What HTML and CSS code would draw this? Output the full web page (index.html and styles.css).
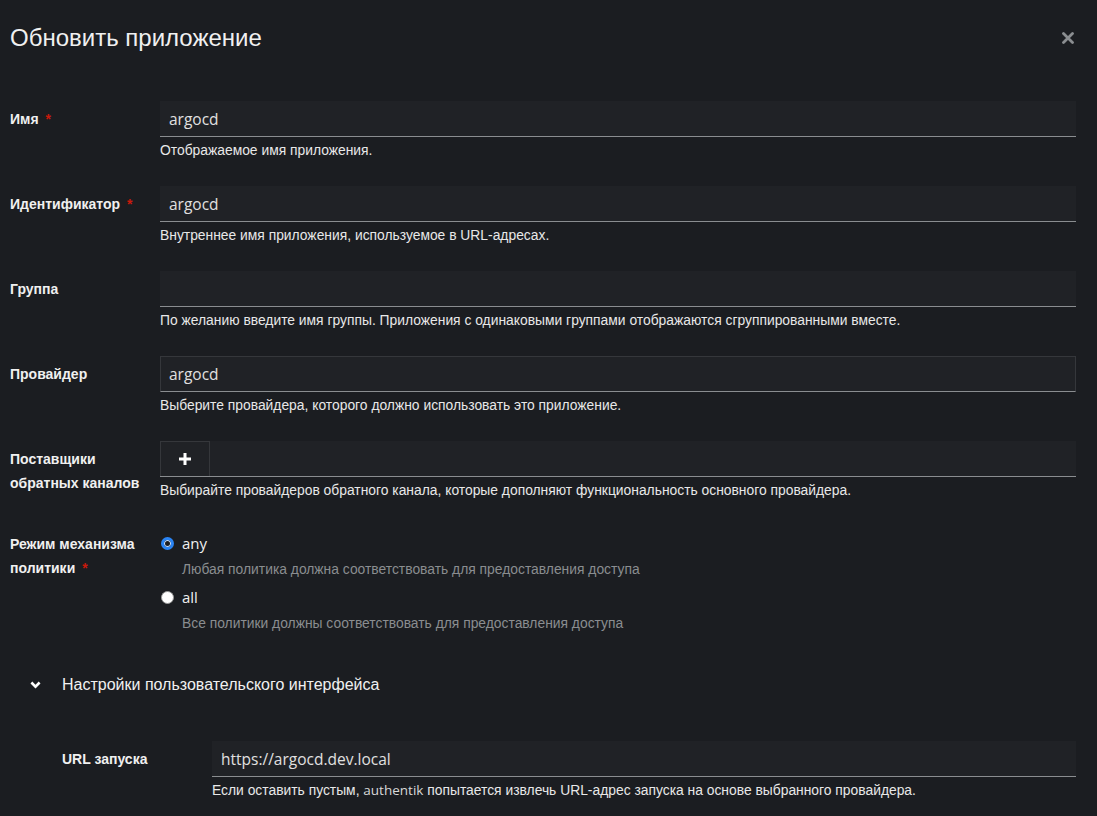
FILE: index.html
```html
<!DOCTYPE html>
<html lang="ru">
<head>
<meta charset="utf-8">
<title>Обновить приложение</title>
<link rel="stylesheet" href="styles.css">
</head>
<body>
<div class="modal">
  <header class="header">
    <h1 class="title">Обновить приложение</h1>
    <button class="close" aria-label="Закрыть">
      <svg width="12" height="12" viewBox="0 0 12 12"><path d="M1.5 1.5 L10.5 10.5 M10.5 1.5 L1.5 10.5" stroke="#8a8d90" stroke-width="2.8" stroke-linecap="round"/></svg>
    </button>
  </header>

  <form class="form">
    <div class="row">
      <label class="label">Имя<span class="req">*</span></label>
      <div class="control">
        <input class="input latin" value="argocd">
        <div class="helper">Отображаемое имя приложения.</div>
      </div>
    </div>

    <div class="row">
      <label class="label">Идентификатор<span class="req">*</span></label>
      <div class="control">
        <input class="input latin" value="argocd">
        <div class="helper">Внутреннее имя приложения, используемое в URL-адресах.</div>
      </div>
    </div>

    <div class="row">
      <label class="label">Группа</label>
      <div class="control">
        <input class="input latin" value="">
        <div class="helper">По желанию введите имя группы. Приложения с одинаковыми группами отображаются сгруппированными вместе.</div>
      </div>
    </div>

    <div class="row">
      <label class="label">Провайдер</label>
      <div class="control">
        <div class="input select latin">argocd</div>
        <div class="helper">Выберите провайдера, которого должно использовать это приложение.</div>
      </div>
    </div>

    <div class="row">
      <label class="label">Поставщики<br>обратных каналов</label>
      <div class="control">
        <div class="chips">
          <span class="add">
            <svg width="14" height="14" viewBox="0 0 14 14"><path d="M7 1 V13 M1 7 H13" stroke="#ffffff" stroke-width="3"/></svg>
          </span>
        </div>
        <div class="helper">Выбирайте провайдеров обратного канала, которые дополняют функциональность основного провайдера.</div>
      </div>
    </div>

    <div class="row">
      <label class="label">Режим механизма<br>политики<span class="req">*</span></label>
      <div class="radios">
        <div class="radio-item">
          <div class="radio-line"><span class="radio checked"></span><span class="radio-label latin">any</span></div>
          <div class="radio-desc">Любая политика должна соответствовать для предоставления доступа</div>
        </div>
        <div class="radio-item">
          <div class="radio-line"><span class="radio"></span><span class="radio-label latin">all</span></div>
          <div class="radio-desc">Все политики должны соответствовать для предоставления доступа</div>
        </div>
      </div>
    </div>

    <section class="expand">
      <div class="toggle">
        <svg class="chev" width="11" height="8" viewBox="0 0 11 8"><path d="M1.4 1.5 L5.5 5.6 L9.6 1.5" fill="none" stroke="#ffffff" stroke-width="2.6"/></svg>
        <span class="toggle-text">Настройки пользовательского интерфейса</span>
      </div>
      <div class="expand-body">
        <div class="row">
          <label class="label">URL запуска</label>
          <div class="control">
            <input class="input latin" value="https://argocd.dev.local">
            <div class="helper">Если оставить пустым, <span class="latin brand">authentik</span> попытается извлечь URL-адрес запуска на основе выбранного провайдера.</div>
          </div>
        </div>
      </div>
    </section>
  </form>
</div>
</body>
</html>
```

FILE: styles.css
```css
html, body {
  margin: 0;
  background: #1b1d21;
  height: 100%;
  overflow: hidden;
}

body {
  color: #e0e0e0;
  font-family: "Liberation Sans", Arial, sans-serif;
}

.modal {
  padding: 23px 21px 0 10px;
}

.header {
  display: flex;
  justify-content: space-between;
  align-items: center;
}

.title {
  margin: 0;
  font-size: 24px;
  font-weight: 400;
  line-height: 29px;
  color: #f0f0f0;
}

.close {
  background: none;
  border: none;
  padding: 0;
  margin: 0 2px 0 0;
  width: 12px;
  height: 12px;
  display: flex;
  cursor: pointer;
}

.form {
  margin: 49px 0 0 0;
  display: flex;
  flex-direction: column;
  gap: 25px;
}

.row {
  display: grid;
  grid-template-columns: 150px 1fr;
}

.label {
  padding-top: 6px;
  font-size: 14px;
  font-weight: 700;
  line-height: 24px;
  color: #f0f0f0;
}

.req {
  color: #c9190b;
  margin-left: 7px;
  font-weight: 700;
}

.latin {
  font-family: "Open Sans", "Liberation Sans", sans-serif;
}

.input {
  display: block;
  box-sizing: border-box;
  width: 100%;
  height: 36px;
  margin: 0;
  padding: 0 9px;
  background: #202226;
  border: none;
  border-bottom: 1px solid #8a8d90;
  color: #e0e0e0;
  font-size: 15.5px;
  outline: none;
}

.select {
  display: flex;
  align-items: center;
  border: 1px solid #35373b;
  border-bottom-color: #8a8d90;
  padding-left: 8px;
}

.helper {
  margin-top: 3px;
  font-size: 13.85px;
  line-height: 21px;
  color: #e8e8e8;
}

.brand {
  font-size: 13.5px;
  color: #d8d8d8;
}

.chips {
  display: flex;
  box-sizing: border-box;
  height: 36px;
  background: #202226;
  border-bottom: 1px solid #8a8d90;
}

.add {
  box-sizing: border-box;
  width: 50px;
  height: 35px;
  display: flex;
  align-items: center;
  justify-content: center;
  border: 1px solid #35373b;
  border-bottom: none;
}

.radios {
  padding-top: 5px;
  display: flex;
  flex-direction: column;
  gap: 5px;
}

.radio-line {
  display: flex;
  align-items: center;
  height: 24px;
}

.radio {
  box-sizing: border-box;
  width: 13px;
  height: 13px;
  margin: 0 8px 0 1px;
  border-radius: 50%;
  background: #ffffff;
  border: 1px solid #9a9a9a;
}

.radio.checked {
  background: #1b1d21;
  border: 3px solid #2a84f4;
  box-shadow: inset 0 0 0 1px #cfe3ff;
}

.radio-label {
  font-size: 15px;
  color: #f0f0f0;
}

.radio-desc {
  margin-top: 4px;
  padding-left: 22px;
  font-size: 13.85px;
  line-height: 21px;
  color: #8a8d90;
}

.expand {
  padding-top: 14px;
}

.toggle {
  display: flex;
  align-items: center;
  height: 24px;
  padding-left: 20px;
}

.chev {
  margin-right: 21px;
}

.toggle-text {
  font-size: 16px;
  color: #f0f0f0;
}

.expand-body {
  padding: 44px 0 0 52px;
}
```
